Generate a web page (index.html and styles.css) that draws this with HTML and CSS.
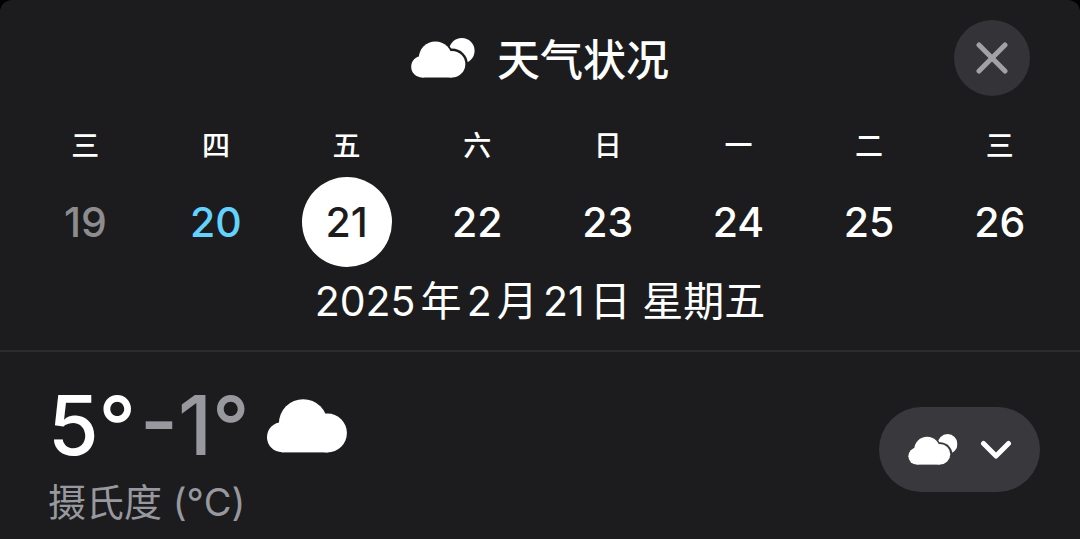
FILE: index.html
```
<!DOCTYPE html>
<html lang="zh-CN">
<head>
	<meta charset="utf-8">
	<meta name="viewport" content="width=device-width, initial-scale=1">
	<title>天气状况</title>
	<link rel="stylesheet" href="styles.css">
</head>
<body>
<!-- shared icon, used in the title and in the picker button -->
<svg class="defs" aria-hidden="true">
	<mask id="sun-cut" maskUnits="userSpaceOnUse" x="0" y="0" width="64" height="40">
		<rect width="64" height="40" fill="#fff"/>
		<g fill="#000">
			<circle cx="24.4" cy="20" r="18.4"/>
			<circle cx="41" cy="26.5" r="15.9"/>
		</g>
	</mask>
	<symbol id="cloud-sun" viewBox="0 0 64 40">
		<circle cx="50.8" cy="12.8" r="12.8" mask="url(#sun-cut)"/>
		<circle cx="11" cy="28.7" r="10.8"/>
		<circle cx="24.4" cy="20" r="16.6"/>
		<circle cx="41" cy="26.2" r="13.3"/>
		<rect x="11" y="22" width="30" height="17.5"/>
	</symbol>
</svg>

<div class="sheet">
	<header class="topbar">
		<h1 class="title">
			<svg class="title-icon" aria-hidden="true"><use href="#cloud-sun"/></svg>
			<span>天气状况</span>
		</h1>
		<button class="close" type="button" aria-label="关闭">
			<svg viewBox="0 0 32 32" aria-hidden="true"><path d="M3 3l26 26M29 3L3 29"/></svg>
		</button>
	</header>

	<nav class="days">
		<button class="day past" type="button"><span class="week">三</span><span class="num">19</span></button>
		<button class="day today" type="button"><span class="week">四</span><span class="num">20</span></button>
		<button class="day selected" type="button" aria-pressed="true"><span class="week">五</span><span class="num">21</span></button>
		<button class="day" type="button"><span class="week">六</span><span class="num">22</span></button>
		<button class="day" type="button"><span class="week">日</span><span class="num">23</span></button>
		<button class="day" type="button"><span class="week">一</span><span class="num">24</span></button>
		<button class="day" type="button"><span class="week">二</span><span class="num">25</span></button>
		<button class="day" type="button"><span class="week">三</span><span class="num">26</span></button>
	</nav>
	<p class="full-date">2025年2月21日 星期五</p>

	<section class="summary">
		<div>
			<div class="temps">
				<span class="high">5°</span>
				<span class="low">-1°</span>
				<svg class="cloud" viewBox="0 0 80 54" aria-hidden="true">
					<circle cx="15" cy="38.2" r="15"/>
					<circle cx="36.2" cy="24.5" r="24.3"/>
					<circle cx="60.4" cy="34" r="19.5"/>
					<rect x="15" y="26" width="45.5" height="27.4"/>
				</svg>
			</div>
			<p class="unit">摄氏度 (°C)</p>
		</div>
		<button class="picker" type="button" aria-label="选择天气状况">
			<svg class="picker-icon" aria-hidden="true"><use href="#cloud-sun"/></svg>
			<svg class="chevron" viewBox="0 0 32 20" aria-hidden="true"><path d="M3.5 3.5L16 16L28.5 3.5"/></svg>
		</button>
	</section>
</div>
</body>
</html>
```
FILE: styles.css
```
* {
	box-sizing: border-box;
}

body {
	margin: 0;
	background: #000;
	color: #fff;
	font-family: Inter, "Noto Sans CJK SC", sans-serif;
}

button {
	border: 0;
	padding: 0;
	background: none;
	color: inherit;
	font: inherit;
	cursor: pointer;
}

svg {
	display: block;
	fill: currentColor;
}

.defs {
	position: absolute;
	width: 0;
	height: 0;
}

.sheet {
	min-height: 100vh;
	background: #1c1c1e;
	border-radius: 12px 12px 0 0;
}

/* title row */
.topbar {
	display: grid;
	grid-template-columns: 1fr auto 1fr;
	align-items: center;
	padding: 20px 50px 0;
}

.title {
	grid-column: 2;
	display: flex;
	align-items: center;
	gap: 22px;
	margin: 0;
	font-size: 43px;
	line-height: 60px;
	font-weight: 500;
}

.title span {
	padding-top: 4px;
}

.title-icon {
	width: 64px;
	height: 40px;
}

.close {
	justify-self: end;
	display: grid;
	place-items: center;
	width: 76px;
	height: 76px;
	border-radius: 50%;
	background: #343438;
	color: #a1a1a7;
}

.close svg {
	width: 32px;
	height: 32px;
	fill: none;
	stroke: currentColor;
	stroke-width: 5;
	stroke-linecap: round;
}

/* day strip */
.days {
	display: grid;
	grid-template-columns: repeat(8, 1fr);
	padding: 30px 15px 0 20px;
}

.day {
	display: flex;
	flex-direction: column;
	align-items: center;
	gap: 11px;
	font-weight: 500;
}

.week {
	font-size: 28px;
	line-height: 40px;
}

.num {
	width: 90px;
	border-radius: 50%;
	font-size: 41px;
	line-height: 90px;
}

.past .num {
	color: #8d8d8f;
}

.today .num {
	color: #64d2ff;
}

.selected .num {
	background: #fff;
	color: #1c1c1e;
}

.full-date {
	margin: 0;
	padding: 4px 0 19px;
	border-bottom: 2px solid #2c2c2e;
	font-size: 41px;
	line-height: 60px;
	text-align: center;
	text-autospace: normal;
}

/* temperature summary */
.summary {
	display: flex;
	justify-content: space-between;
	align-items: flex-start;
	padding: 24px 40px 0 48px;
}

.temps {
	display: flex;
	align-items: center;
	gap: 4px;
	font-size: 82px;
	line-height: 100px;
	font-weight: 500;
}

.low,
.unit {
	color: #98989f;
}

.cloud {
	width: 80px;
	height: 54px;
	margin-left: 14px;
}

.unit {
	margin: 0;
	font-size: 38px;
	line-height: 52px;
}

.picker {
	display: flex;
	justify-content: center;
	align-items: center;
	gap: 22px;
	width: 161px;
	height: 85px;
	margin-top: 31px;
	border-radius: 43px;
	background: #39393d;
}

.picker-icon {
	width: 50px;
	height: 31px;
}

.chevron {
	width: 32px;
	height: 20px;
	fill: none;
	stroke: currentColor;
	stroke-width: 5;
	stroke-linecap: round;
	stroke-linejoin: round;
}
```
